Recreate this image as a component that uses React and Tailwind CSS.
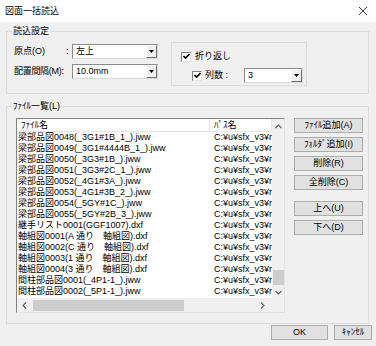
import React from 'react';

const rows = [
  '梁部品図0048(_3G1#1B_1_).jww',
  '梁部品図0049(_3G1#4444B_1_).jww',
  '梁部品図0050(_3G3#1B_).jww',
  '梁部品図0051(_3G3#2C_1_).jww',
  '梁部品図0052(_4G1#3A_).jww',
  '梁部品図0053(_4G1#3B_2_).jww',
  '梁部品図0054(_5GY#1C_).jww',
  '梁部品図0055(_5GY#2B_3_).jww',
  '継手リスト0001(GGF1007).dxf',
  '軸組図0001(A 通り\u3000軸組図).dxf',
  '軸組図0002(C 通り\u3000軸組図).dxf',
  '軸組図0003(1 通り\u3000軸組図).dxf',
  '軸組図0004(3 通り\u3000軸組図).dxf',
  '間柱部品図0001(_4P1-1_).jww',
  '間柱部品図0002(_5P1-1_).jww',
];

function DropButton() {
  return (
    <div className="w-[11px] h-full flex items-center justify-center bg-[#f0f0f0] border border-t-white border-l-white border-r-[#6d6d6d] border-b-[#6d6d6d]">
      <svg width="5" height="3" viewBox="0 0 5 3">
        <polygon points="0,0 5,0 2.5,3" fill="#000" />
      </svg>
    </div>
  );
}

function Combo({ value, width }) {
  return (
    <div className={`flex h-[15px] bg-white border border-t-[#8c8c8c] border-l-[#8c8c8c] border-r-[#dadada] border-b-[#dadada] ${width}`}>
      <div className="flex-1 pl-[3px] leading-[13px] whitespace-nowrap">{value}</div>
      <DropButton />
    </div>
  );
}

function CheckBox() {
  return (
    <div className="w-[10px] h-[10px] bg-white border border-t-[#808080] border-l-[#808080] border-r-[#e3e3e3] border-b-[#e3e3e3] flex items-center justify-center">
      <svg width="7" height="7" viewBox="0 0 7 7">
        <path d="M0.5 3 L2.5 5 L6.5 1" stroke="#000" strokeWidth="1.6" fill="none" />
      </svg>
    </div>
  );
}

function Button({ children, className = '' }) {
  return (
    <div className={`h-[15px] flex items-center justify-center bg-[#e1e1e1] border border-[#adadad] leading-[13px] ${className}`}>
      {children}
    </div>
  );
}

export default function App() {
  return (
    <div className="w-[376px] h-[346px] bg-[#f0f0f0] text-black text-[9px] leading-[11px] overflow-hidden [font-family:'Liberation_Sans','Noto_Sans_CJK_JP',sans-serif]">
      {/* title bar */}
      <div className="h-[22px] bg-white flex items-center justify-between pl-[5px] pr-[9px]">
        <span className="text-[9px]">図面一括読込</span>
        <svg width="8" height="8" viewBox="0 0 8 8">
          <path d="M0 0 L8 8 M8 0 L0 8" stroke="#222" strokeWidth="0.9" />
        </svg>
      </div>

      <div className="pl-[6px] pr-[7px]">
        {/* 読込設定 */}
        <fieldset className="mt-[3px] h-[69px] border border-[#dcdcdc]">
          <legend className="ml-[5px] px-[1px] leading-[12px]">読込設定</legend>
          <div className="flex">
            <div className="pl-[7px] mt-[7px] flex flex-col gap-[5px]">
              <div className="flex items-center">
                <span className="w-[52px]">原点(O)</span>
                <span className="w-[6px]">:</span>
                <Combo value="左上" width="w-[86px]" />
              </div>
              <div className="flex items-center">
                <span className="w-[58px] whitespace-nowrap tracking-[-0.3px]">配置間隔(M):</span>
                <Combo value="10.0mm" width="w-[86px]" />
              </div>
            </div>
            <div className="ml-[13px] mt-[5px] w-[136px] h-[44px] border border-[#dcdcdc] pt-[8px] pl-[9px]">
              <div className="flex items-center gap-[4px]">
                <CheckBox />
                <span>折り返し</span>
              </div>
              <div className="flex items-center mt-[6px] ml-[11px]">
                <CheckBox />
                <span className="ml-[3px] w-[39px]">列数 :</span>
                <Combo value="3" width="w-[59px]" />
              </div>
            </div>
          </div>
        </fieldset>

        {/* ファイル一覧 */}
        <fieldset className="mt-[6px] h-[224px] border border-[#dcdcdc]">
          <legend className="ml-[5px] px-[1px] leading-[12px]">ﾌｧｲﾙ一覧(L)</legend>
          <div className="flex">
            {/* list view */}
            <div className="ml-[9px] mt-[6px] w-[269px] h-[195px] bg-white border border-t-[#828282] border-l-[#828282] border-r-[#e3e3e3] border-b-[#e3e3e3] flex flex-col">
              <div className="flex flex-1 min-h-0">
                <div className="flex-1 flex flex-col">
                  <div className="flex h-[13px] border-b border-[#e5e5e5]">
                    <div className="w-[193px] pl-[4px] border-r border-[#e5e5e5] leading-[12px]">ﾌｧｲﾙ名</div>
                    <div className="flex-1 pl-[4px] leading-[12px] border-r border-[#e5e5e5]">ﾊﾟｽ名</div>
                  </div>
                  {rows.map((r) => (
                    <div key={r} className="flex h-[11px]">
                      <div className="w-[193px] pl-[1px] whitespace-nowrap overflow-hidden">{r}</div>
                      <div className="flex-1 pl-[4px] whitespace-nowrap overflow-hidden">C:¥u¥sfx_v3¥r</div>
                    </div>
                  ))}
                </div>
                {/* vertical scrollbar */}
                <div className="w-[14px] bg-[#f0f0f0] flex flex-col items-center">
                  <svg className="mt-[5px]" width="7" height="5" viewBox="0 0 7 5">
                    <path d="M0.5 4 L3.5 1 L6.5 4" stroke="#606060" strokeWidth="1.1" fill="none" />
                  </svg>
                  <div className="flex-1" />
                  <div className="w-[11px] h-[15px] bg-[#cdcdcd]" />
                  <svg className="mt-[5px] mb-[3px]" width="7" height="5" viewBox="0 0 7 5">
                    <path d="M0.5 1 L3.5 4 L6.5 1" stroke="#606060" strokeWidth="1.1" fill="none" />
                  </svg>
                </div>
              </div>
              {/* horizontal scrollbar */}
              <div className="flex h-[14px]">
                <div className="flex-1 bg-[#f0f0f0] flex items-center">
                  <svg className="ml-[5px]" width="5" height="7" viewBox="0 0 5 7">
                    <path d="M4 0.5 L1 3.5 L4 6.5" stroke="#606060" strokeWidth="1.1" fill="none" />
                  </svg>
                  <div className="ml-[6px] w-[151px] h-[11px] bg-[#cdcdcd]" />
                  <div className="flex-1" />
                  <svg className="mr-[5px]" width="5" height="7" viewBox="0 0 5 7">
                    <path d="M1 0.5 L4 3.5 L1 6.5" stroke="#606060" strokeWidth="1.1" fill="none" />
                  </svg>
                </div>
                <div className="w-[14px] bg-[#f0f0f0]" />
              </div>
            </div>

            {/* side buttons */}
            <div className="ml-[9px] mt-[6px] w-[69px] flex flex-col gap-[4px]">
              <Button>ﾌｧｲﾙ追加(A)</Button>
              <Button>ﾌｫﾙﾀﾞ追加(I)</Button>
              <Button>削除(R)</Button>
              <Button>全削除(C)</Button>
              <Button className="mt-[7px]">上へ(U)</Button>
              <Button>下へ(D)</Button>
            </div>
          </div>
        </fieldset>

        <div className="flex justify-end gap-[6px] mt-[1px] -mr-[3px]">
          <Button className="w-[57px]">OK</Button>
          <Button className="w-[38px]">ｷｬﾝｾﾙ</Button>
        </div>
      </div>
    </div>
  );
}
